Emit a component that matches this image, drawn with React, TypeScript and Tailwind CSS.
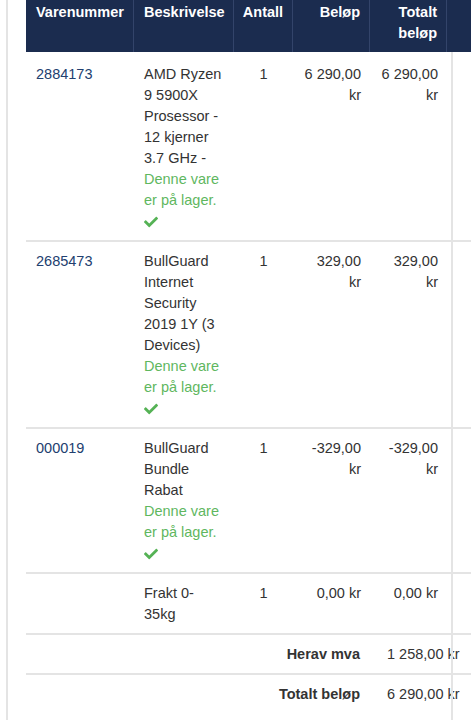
import { FaCheck } from "react-icons/fa";

const cols = "grid grid-cols-[108px_100px_59px_77px_77px_1fr]";

const items = [
    {
        nr: "2884173",
        desc: ["AMD Ryzen", "9 5900X", "Prosessor -", "12 kjerner", "3.7 GHz -"],
        qty: "1",
        price: ["6 290,00", "kr"],
        total: ["6 290,00", "kr"],
        stock: true,
    },
    {
        nr: "2685473",
        desc: ["BullGuard", "Internet", "Security", "2019 1Y (3", "Devices)"],
        qty: "1",
        price: ["329,00", "kr"],
        total: ["329,00", "kr"],
        stock: true,
    },
    {
        nr: "000019",
        desc: ["BullGuard", "Bundle", "Rabat"],
        qty: "1",
        price: ["-329,00", "kr"],
        total: ["-329,00", "kr"],
        stock: true,
    },
    {
        nr: "",
        desc: ["Frakt 0-", "35kg"],
        qty: "1",
        price: ["0,00 kr"],
        total: ["0,00 kr"],
        stock: false,
    },
];

function Lines({ lines }: { lines: string[] }) {
    return (
        <>
            {lines.map((l, i) => (
                <div key={i} className="whitespace-nowrap">
                    {l}
                </div>
            ))}
        </>
    );
}

export default function App() {
    return (
        <div className="relative w-[471px] h-[720px] overflow-hidden bg-white text-[14.5px] leading-[21px] text-[#333333] font-['Liberation_Sans',Arial,sans-serif]">
            <div className="ml-[6px] h-full border-l-2 border-[#e4e4e4] pl-[18px]">
                <div className="w-[480px]">
                    {/* header */}
                    <div className={`${cols} h-[52px] bg-[#1b2c4f] text-white font-bold`}>
                        <div className="px-[10px] pt-[2px] border-r border-[#33446a]">Varenummer</div>
                        <div className="px-[10px] pt-[2px] border-r border-[#33446a]">Beskrivelse</div>
                        <div className="pt-[2px] text-center border-r border-[#33446a]">Antall</div>
                        <div className="px-[9px] pt-[2px] text-right border-r border-[#33446a]">Beløp</div>
                        <div className="px-[9px] pt-[2px] text-right border-r border-[#33446a]">
                            Totalt
                            <br />
                            beløp
                        </div>
                        <div></div>
                    </div>

                    {items.map((it, i) => (
                        <div
                            key={i}
                            className={`${cols} border-b-2 border-[#e4e4e4] pb-[8px] ${i === 0 ? "pt-[12px]" : "pt-[9px]"}`}
                        >
                            <div className="px-[10px] text-[#22406f]">{it.nr}</div>
                            <div className="px-[10px]">
                                <Lines lines={it.desc} />
                                {it.stock && (
                                    <div className="text-[#5fb75f]">
                                        <div>Denne vare</div>
                                        <div>er på lager.</div>
                                        <div className="h-[21px] flex items-center">
                                            <FaCheck className="w-[14px] h-[14px] text-[#55b255]" />
                                        </div>
                                    </div>
                                )}
                            </div>
                            <div className="text-center">{it.qty}</div>
                            <div className="px-[9px] text-right">
                                <Lines lines={it.price} />
                            </div>
                            <div className="px-[9px] text-right">
                                <Lines lines={it.total} />
                            </div>
                            <div></div>
                        </div>
                    ))}

                    <div className={`${cols} border-b-2 border-[#e4e4e4] pt-[9px] pb-[8px]`}>
                        <div className="col-span-4 pr-[10px] text-right font-bold">Herav mva</div>
                        <div className="col-span-2 pl-[17px] whitespace-nowrap">1 258,00 kr</div>
                    </div>
                    <div className={`${cols} pt-[9px] pb-[8px]`}>
                        <div className="col-span-4 pr-[10px] text-right font-bold">Totalt beløp</div>
                        <div className="col-span-2 pl-[17px] whitespace-nowrap">6 290,00 kr</div>
                    </div>
                </div>
            </div>
            <div className="absolute left-[451px] top-[52px] bottom-0 w-[2px] bg-[#e4e4e4]"></div>
        </div>
    );
}
